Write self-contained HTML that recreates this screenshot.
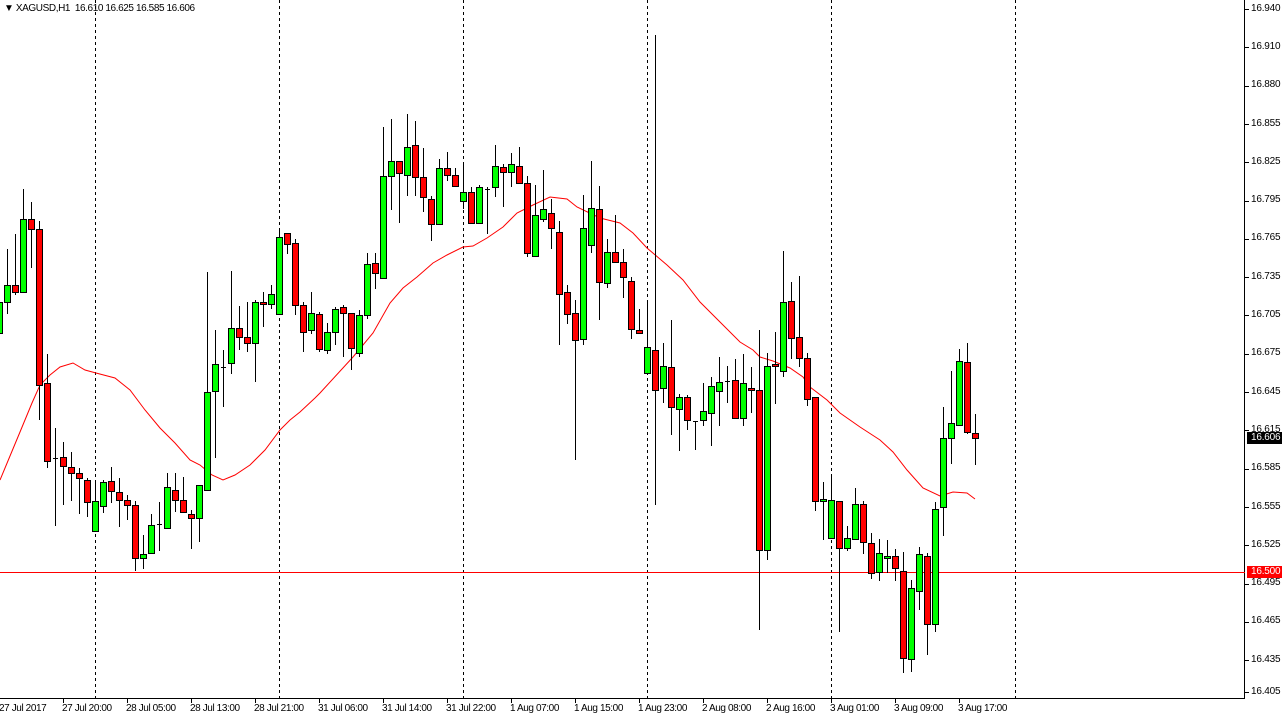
<!DOCTYPE html>
<html><head><meta charset="utf-8">
<style>
html,body{margin:0;padding:0;background:#fff;}
body{width:1282px;height:720px;position:relative;overflow:hidden;font-family:"Liberation Sans",sans-serif;font-size:10px;color:#000;}
.t{position:absolute;white-space:nowrap;line-height:12px;letter-spacing:-0.4px;}
.p{position:absolute;left:1251px;white-space:nowrap;line-height:12px;letter-spacing:-0.2px;}
</style></head><body>
<svg id="c" width="1282" height="720" style="position:absolute;left:0;top:0" shape-rendering="crispEdges"></svg>
<div class="t" style="left:4px;top:3px;">&#9660; XAGUSD,H1&nbsp; 16.610 16.625 16.585 16.606</div>
<div class="t" style="left:-1px;top:703px">27 Jul 2017</div>
<div class="t" style="left:62px;top:703px">27 Jul 20:00</div>
<div class="t" style="left:126px;top:703px">28 Jul 05:00</div>
<div class="t" style="left:190px;top:703px">28 Jul 13:00</div>
<div class="t" style="left:254px;top:703px">28 Jul 21:00</div>
<div class="t" style="left:318px;top:703px">31 Jul 06:00</div>
<div class="t" style="left:382px;top:703px">31 Jul 14:00</div>
<div class="t" style="left:446px;top:703px">31 Jul 22:00</div>
<div class="t" style="left:510px;top:703px">1 Aug 07:00</div>
<div class="t" style="left:574px;top:703px">1 Aug 15:00</div>
<div class="t" style="left:638px;top:703px">1 Aug 23:00</div>
<div class="t" style="left:702px;top:703px">2 Aug 08:00</div>
<div class="t" style="left:766px;top:703px">2 Aug 16:00</div>
<div class="t" style="left:830px;top:703px">3 Aug 01:00</div>
<div class="t" style="left:894px;top:703px">3 Aug 09:00</div>
<div class="t" style="left:958px;top:703px">3 Aug 17:00</div>
<div class="p" style="top:3px">16.940</div>
<div class="p" style="top:41px">16.910</div>
<div class="p" style="top:79px">16.880</div>
<div class="p" style="top:118px">16.855</div>
<div class="p" style="top:156px">16.825</div>
<div class="p" style="top:194px">16.795</div>
<div class="p" style="top:232px">16.765</div>
<div class="p" style="top:271px">16.735</div>
<div class="p" style="top:309px">16.705</div>
<div class="p" style="top:347px">16.675</div>
<div class="p" style="top:386px">16.645</div>
<div class="p" style="top:424px">16.615</div>
<div class="p" style="top:462px">16.585</div>
<div class="p" style="top:501px">16.555</div>
<div class="p" style="top:539px">16.525</div>
<div class="p" style="top:577px">16.495</div>
<div class="p" style="top:615px">16.465</div>
<div class="p" style="top:654px">16.435</div>
<div class="p" style="top:686px">16.405</div>
<div class="p" style="top:432px;left:1247px;background:#000;color:#fff;padding:0 4px 0 4px;width:27px">16.606</div>
<div class="p" style="top:566px;left:1247px;background:#f00;color:#fff;padding:0 4px 0 4px;width:27px">16.500</div>
<script>
var s=document.getElementById('c'),h='';
function L(x1,y1,x2,y2,c,ex){h+='<line x1="'+x1+'" y1="'+y1+'" x2="'+x2+'" y2="'+y2+'" stroke="'+c+'" stroke-width="1" '+(ex||'')+'/>';}
[95,279,463,647,831,1015].forEach(function(x){L(x+.5,0,x+.5,699,'#000','stroke-dasharray="3,3"');});
L(1244.5,0,1244.5,699,'#000');L(0,698.5,1245,698.5,'#000');
for(var i=0;i<19;i++){var y=Math.round(9+i*38.3);if(i==18)y=692;L(1245,y+.5,1249,y+.5,'#000');}
for(var x=63;x<1000;x+=64)L(x+.5,699,x+.5,703,'#000');
var ma=[[0,480],[10,456],[20,432],[32,403],[40,385],[50,375],[60,367],[73,363],[85,370],[96,373],[115,378],[130,390],[145,410],[160,428],[175,443],[190,460],[200,465],[212,475],[223,480],[235,475],[250,465],[265,450],[280,430],[290,420],[300,412],[315,398],[320,393],[353,357],[373,333],[390,303],[403,288],[417,277],[433,263],[447,255],[463,247],[473,246],[487,238],[503,227],[517,213],[533,205],[550,197],[567,199],[577,207],[600,218],[620,223],[633,233],[647,248],[667,265],[683,280],[700,302],[720,322],[740,342],[753,350],[760,357],[773,361],[790,368],[803,377],[810,387],[827,400],[840,413],[860,427],[880,440],[893,452],[907,470],[923,488],[940,496],[953,492],[967,493],[975,499]];
h+='<polyline fill="none" stroke="#f00" stroke-width="1" shape-rendering="auto" points="'+ma.map(function(p){return p.join(',')}).join(' ')+'"/>';
L(0,572.5,1245,572.5,'#f00');
var d=[[-1,290,302,333,340,1],[7,249,285,302,313,1],[15,234,285,292,294,0],[23,189,219,292,292,1],[31,202,219,229,267,0],[39,221,229,385,419,0],[47,354,383,461,467,0],[55,428,458,458,525,2],[63,442,457,466,504,0],[71,452,467,473,500,0],[79,468,473,478,513,0],[87,478,480,502,516,0],[95,481,501,531,531,1],[103,480,482,506,512,1],[111,467,481,491,502,0],[119,478,492,500,526,0],[127,495,500,505,519,0],[135,501,505,558,570,0],[143,535,554,558,568,1],[151,514,525,553,553,1],[159,502,524,524,550,2],[167,473,487,528,528,1],[175,473,490,500,511,0],[183,477,500,512,512,0],[191,510,514,518,548,0],[199,485,485,518,541,1],[207,272,392,490,490,1],[215,330,364,391,457,1],[223,350,367,367,406,2],[231,271,328,363,373,1],[239,306,328,337,349,0],[247,302,337,343,351,0],[255,300,302,343,381,1],[263,292,302,304,326,0],[271,285,294,304,308,1],[279,228,237,314,314,1],[287,233,233,244,253,0],[295,239,243,305,314,0],[303,302,305,332,351,0],[311,292,313,330,333,1],[319,312,314,349,351,0],[327,323,332,350,353,1],[335,307,309,332,344,1],[343,305,307,313,356,0],[351,313,313,348,369,0],[359,310,315,353,356,1],[367,253,264,315,318,1],[375,253,263,273,288,0],[383,127,176,278,278,1],[391,119,161,176,209,1],[399,161,161,173,222,0],[407,114,147,175,195,1],[415,121,145,177,195,0],[423,148,177,197,211,0],[431,196,199,224,240,0],[439,159,168,224,224,1],[447,152,168,175,180,0],[455,168,175,186,186,0],[463,163,192,201,208,1],[471,187,192,223,223,0],[479,185,187,223,223,1],[487,187,189,189,233,2],[495,145,166,187,196,1],[503,164,167,172,206,0],[511,153,164,172,186,1],[519,147,166,183,183,0],[527,176,183,253,256,0],[535,185,215,256,256,1],[543,170,209,219,221,1],[551,199,213,228,248,0],[559,221,232,294,344,0],[567,285,292,314,323,0],[575,300,313,340,459,0],[583,195,228,339,344,1],[591,161,208,245,252,1],[599,186,209,282,319,0],[607,239,252,283,287,1],[615,215,252,262,262,0],[623,249,262,277,297,0],[631,277,281,329,338,0],[639,309,330,333,333,0],[647,301,347,373,373,1],[655,35,350,390,504,0],[663,343,366,388,402,1],[671,320,367,407,434,0],[679,394,397,409,450,1],[687,395,397,420,429,0],[695,421,421,421,449,2],[703,383,411,420,425,1],[711,377,386,413,445,1],[719,357,382,391,425,1],[727,366,381,381,402,2],[735,359,380,418,418,0],[743,354,383,418,425,1],[751,367,388,390,412,0],[759,330,390,550,629,0],[767,353,366,550,559,1],[775,332,364,366,403,0],[783,251,302,371,376,1],[791,282,301,338,358,0],[799,276,337,358,366,0],[807,353,358,399,405,0],[815,397,397,501,510,0],[823,482,499,501,539,1],[831,475,500,538,538,1],[839,501,501,548,631,0],[847,526,538,548,550,1],[855,488,504,539,539,1],[863,501,504,542,553,0],[871,533,543,573,578,0],[879,539,553,572,580,1],[887,540,556,558,572,1],[895,549,556,568,580,0],[903,552,571,658,672,0],[911,580,588,659,671,1],[919,547,554,591,609,1],[927,553,556,624,654,0],[935,502,509,624,631,1],[943,407,438,507,535,1],[951,371,423,438,463,1],[959,349,361,425,425,1],[967,343,362,432,433,0],[975,414,433,438,464,0]];
d.forEach(function(c){var x=c[0];
 L(x+.5,c[1],x+.5,c[4]+1,'#000');
 if(c[5]==2){L(x-2,c[2]+.5,x+3,c[2]+.5,'#000');return;}
 var t=c[2],b=c[3];if(b-t<2)b=t+2;
 h+='<rect x="'+(x-2.5)+'" y="'+(t+.5)+'" width="6" height="'+(b-t)+'" fill="'+(c[5]?'#00ff00':'#ff0000')+'" stroke="#000" stroke-width="1"/>';});
s.innerHTML=h;
</script>
</body></html>
